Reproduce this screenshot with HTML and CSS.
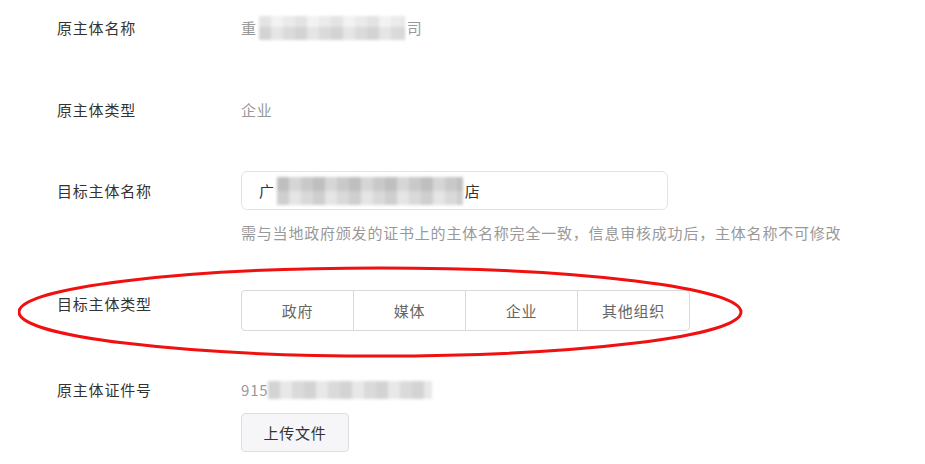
FILE: index.html
```html
<!DOCTYPE html>
<html lang="zh-CN">

<head>
    <meta charset="UTF-8">
    <meta name="viewport" content="width=device-width, initial-scale=1.0">
    <title>主体变更</title>
    <link rel="stylesheet" href="styles.css">
</head>

<body>
    <div class="form">
        <div class="row row-first">
            <div class="label">原主体名称</div>
            <div class="value">重<span class="mosaic mosaic-name"></span>司</div>
        </div>

        <div class="row row-type">
            <div class="label">原主体类型</div>
            <div class="value">企业</div>
        </div>

        <div class="row row-target">
            <div class="label label-input">目标主体名称</div>
            <div class="field">
                <div class="input">广<span class="mosaic mosaic-input"></span>店</div>
                <div class="help">需与当地政府颁发的证书上的主体名称完全一致，信息审核成功后，主体名称不可修改</div>
            </div>
        </div>

        <div class="row row-kind">
            <div class="label label-seg">目标主体类型</div>
            <div class="segments">
                <div class="seg">政府</div>
                <div class="seg">媒体</div>
                <div class="seg">企业</div>
                <div class="seg">其他组织</div>
            </div>
        </div>

        <div class="row row-cert">
            <div class="label">原主体证件号</div>
            <div class="field">
                <div class="value">915<span class="mosaic mosaic-num"></span></div>
                <button class="upload">上传文件</button>
            </div>
        </div>

        <!-- 标注用的红圈 -->
        <svg class="mark" width="740" height="100" viewBox="0 0 740 100">
            <ellipse cx="362" cy="48" rx="361" ry="44" fill="none" stroke="#f01010" stroke-width="3" />
        </svg>
    </div>
</body>

</html>
```

FILE: styles.css
```css
body {
    margin: 0;
    background: #fff;
    font-family: "Noto Sans CJK SC", "Noto Sans", sans-serif;
    font-size: 15px;
    letter-spacing: 0.8px;
    line-height: 20px;
    color: #333;
}

.form {
    position: relative;
    padding-left: 57px;
    padding-top: 18px;
}

.row {
    display: grid;
    grid-template-columns: 184px auto;
    align-items: start;
}

.row-type {
    margin-top: 62px;
}

.row-target {
    margin-top: 51px;
}

.row-kind {
    margin-top: 47px;
}

.row-cert {
    margin-top: 49px;
}

.label {
    color: #333;
}

.label-input {
    padding-top: 10px;
}

.label-seg {
    padding-top: 4px;
}

.value {
    color: #999;
    display: flex;
    align-items: center;
    height: 20px;
}

/* 打码区域 */
.mosaic {
    display: inline-block;
    flex-shrink: 0;
    filter: blur(1.5px);
    background:
        repeating-linear-gradient(90deg, rgba(0, 0, 0, 0.05) 0 12px, rgba(255, 255, 255, 0.2) 12px 24px, rgba(0, 0, 0, 0.02) 24px 36px),
        linear-gradient(#efefef 0 45%, #dedede 45% 100%);
}

.mosaic-name {
    width: 146px;
    height: 24px;
    margin: 0 2px 0 2px;
}

.mosaic-input {
    width: 186px;
    height: 28px;
    margin: 0 2px 0 2px;
    background:
        repeating-linear-gradient(90deg, rgba(0, 0, 0, 0.08) 0 12px, rgba(255, 255, 255, 0.15) 12px 24px, rgba(0, 0, 0, 0.03) 24px 36px),
        linear-gradient(#cfcfcf 0 50%, #e0e0e0 50% 100%);
}

.mosaic-num {
    width: 164px;
    height: 18px;
    background:
        repeating-linear-gradient(90deg, rgba(0, 0, 0, 0.05) 0 12px, rgba(255, 255, 255, 0.3) 12px 24px, rgba(0, 0, 0, 0.02) 24px 36px),
        #dedede;
}

.field {
    display: flex;
    flex-direction: column;
    align-items: flex-start;
}

.input {
    box-sizing: border-box;
    width: 427px;
    height: 39px;
    border: 1px solid #e3e3e3;
    border-radius: 6px;
    padding: 0 17px;
    display: flex;
    align-items: center;
    color: #333;
}

.help {
    margin-top: 13px;
    color: #999;
    white-space: nowrap;
}

.segments {
    display: flex;
    width: 449px;
    height: 41px;
    box-sizing: border-box;
    border: 1px solid #d9d9d9;
    border-radius: 4px;
}

.seg {
    flex: 1;
    display: flex;
    align-items: center;
    justify-content: center;
    color: #666;
    border-left: 1px solid #d9d9d9;
}

.seg:first-child {
    border-left: none;
}

.upload {
    margin-top: 13px;
    width: 108px;
    height: 39px;
    background: #f6f6f8;
    border: 1px solid #dedede;
    border-radius: 4px;
    font-family: inherit;
    font-size: 15px;
    letter-spacing: 0.8px;
    color: #333;
    cursor: pointer;
}

.mark {
    position: absolute;
    left: 18px;
    top: 264px;
    pointer-events: none;
}
```
